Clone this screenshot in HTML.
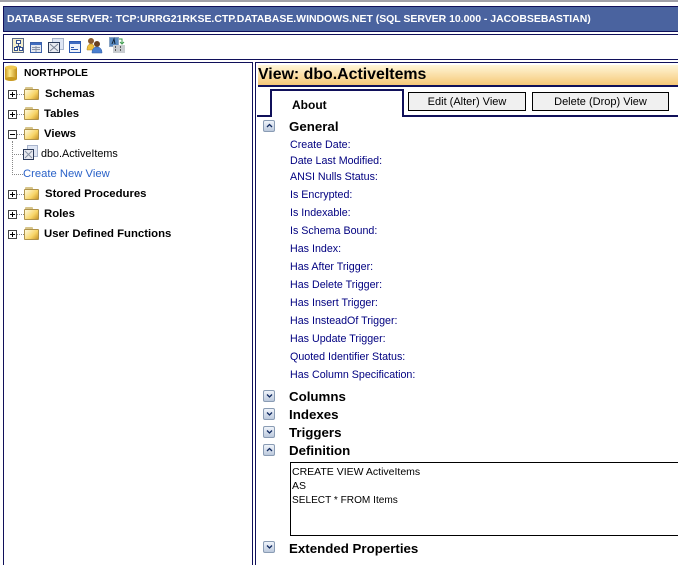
<!DOCTYPE html>
<html><head><meta charset="utf-8"><style>
html,body{margin:0;padding:0;background:#fff;overflow:hidden;width:678px;height:565px}
#w{width:678px;height:565px;position:relative;overflow:hidden;font-family:"Liberation Sans",sans-serif}
.a{position:absolute;white-space:nowrap;box-sizing:border-box}
.t{position:absolute;white-space:nowrap;font-size:11.35px;font-weight:bold;color:#000;line-height:14px}
.l{position:absolute;white-space:nowrap;font-size:10.7px;color:#000080;line-height:14px;left:290px}
.h{position:absolute;white-space:nowrap;font-size:13.3px;font-weight:bold;color:#000;line-height:16px;left:289px}
.pm{position:absolute;left:8px;width:9px;height:9px;border:1px solid #444;box-sizing:border-box;background:#fff}
.pm:before{content:"";position:absolute;left:1px;top:3px;width:5px;height:1px;background:#000}
.pm.p:after{content:"";position:absolute;left:3px;top:1px;width:1px;height:5px;background:#000}
.dh{position:absolute;left:17px;width:7px;border-top:1px dotted #888}
.f{position:absolute;left:24px;width:15px;height:11px;border:1px solid #b0934a;box-sizing:border-box;border-radius:1px;background:linear-gradient(135deg,#fffbe0,#f8d568 60%,#c9962a)}
.f:before{content:"";position:absolute;left:0;top:-3px;width:8px;height:2px;background:#d8c68c;border-radius:1px 1px 0 0}
.b{position:absolute;left:263px;width:12px;height:12px;box-sizing:border-box;border:1px solid #8a9cb4;border-radius:2px;background:linear-gradient(#f0f4fa,#bcc9dc)}
.b svg{position:absolute;left:2px;top:2px}
.btn{position:absolute;top:92px;height:19px;border:1px solid #000;background:#f0f0f0;font-size:11px;text-align:center;line-height:18px;box-sizing:border-box;color:#000}
</style></head><body><div id="w">
<div class="a" style="left:0;top:0;width:678px;height:2px;background:#a0a0a8"></div>
<div class="a" style="left:3px;top:6px;width:675px;height:26px;background:#4a639f;border:1px solid #10105a;border-right:0;color:#fff;font-size:10.5px;font-weight:bold;line-height:24px;padding-left:3px;letter-spacing:-.03px">DATABASE SERVER: TCP:URRG21RKSE.CTP.DATABASE.WINDOWS.NET (SQL SERVER 10.000 - JACOBSEBASTIAN)</div>
<div class="a" style="left:3px;top:34px;width:675px;height:26px;border:1px solid #10105a;border-right:0"></div>

<!-- toolbar icons -->
<svg class="a" style="left:11px;top:36px" width="120" height="20" viewBox="0 0 120 20">
<rect x="1.500" y="2.500" width="11" height="14" fill="#f4eecb" stroke="#5a6a8a"/><rect x="5.500" y="4.500" width="4" height="3" fill="#fff" stroke="#33508f"/><rect x="3.500" y="11.500" width="3" height="3" fill="#fff" stroke="#33508f"/><rect x="8.500" y="11.500" width="3" height="3" fill="#fff" stroke="#33508f"/><path d="M7.500 8v2M5 10.500h5" stroke="#33508f" fill="none"/>
<rect x="19.500" y="6.500" width="11" height="10" fill="#e4e8f0" stroke="#3a5fa8"/><rect x="20" y="7" width="10" height="2" fill="#3f6cc0"/><path d="M21 11.500h8M21 13.500h8M25 10v6" stroke="#8a94a8" fill="none"/>
<rect x="41.500" y="2.500" width="11" height="11" fill="#dfe6f4" stroke="#a8b4cc"/><rect x="37.500" y="6.500" width="11" height="10" fill="#e8eaf0" stroke="#2a3a5a"/><path d="M39 8l8 7M47 8l-8 7" stroke="#7a8496" fill="none"/>
<rect x="58.500" y="5.500" width="11" height="11" fill="#eef2fa" stroke="#2a58b0"/><rect x="59" y="6" width="10" height="2" fill="#3f6cc0"/><path d="M60 11.500h3M60 13.500h7" stroke="#2a58b0" fill="none"/>
<circle cx="80" cy="5" r="3" fill="#8a5a30"/><path d="M76 14c0-5 2-6 4-6s3 1 3 3v3z" fill="#f0c040" stroke="#a88020" stroke-width=".5"/><circle cx="86" cy="8" r="3" fill="#6a4020"/><path d="M81 17c0-5 3-6 5-6s5 1 5 6z" fill="#4a7fd0" stroke="#2a58a0" stroke-width=".5"/>
<rect x="98.500" y="1.500" width="9" height="9" fill="#5a8ac0" stroke="#8aa4c4"/><path d="M101 8l2-5 1 5" stroke="#123" fill="none"/><path d="M108 3h3v4" stroke="#3a9a4a" fill="none"/><path d="M109 6l2 2 2-2" stroke="#3a9a4a" fill="none"/><rect x="102" y="9" width="12" height="8" fill="#c8ccd0"/><path d="M104 11h2M109 11h2M104 14h2M109 14h2" stroke="#333" stroke-width="1.500" stroke-dasharray="1 1"/>
</svg>

<!-- left panel -->
<div class="a" style="left:3px;top:62px;width:250px;height:520px;border:1px solid #10105a"></div>
<svg class="a" style="left:5px;top:65px" width="13" height="16"><defs><linearGradient id="g"><stop offset="0" stop-color="#c99a20"/><stop offset=".4" stop-color="#ffe888"/><stop offset="1" stop-color="#c08e18"/></linearGradient></defs><rect x="0" y="2" width="12" height="12" fill="url(#g)"/><ellipse cx="6" cy="2.500" rx="6" ry="2" fill="#f0c850"/><ellipse cx="6" cy="14" rx="6" ry="2" fill="#c99a20"/></svg>
<div class="t" style="left:24px;top:67px;font-size:10.2px">NORTHPOLE</div>

<div class="pm p" style="top:90px"></div><div class="dh" style="top:94px"></div><div class="f" style="top:89px"></div><div class="t" style="left:45px;top:87px">Schemas</div>
<div class="pm p" style="top:110px"></div><div class="dh" style="top:114px"></div><div class="f" style="top:109px"></div><div class="t" style="left:44px;top:107px">Tables</div>
<div class="pm" style="top:130px"></div><div class="dh" style="top:134px"></div><div class="f" style="top:129px"></div><div class="t" style="left:44px;top:127px">Views</div>
<div class="a" style="left:12px;top:141px;height:34px;border-left:1px dotted #888"></div>
<div class="a" style="left:12px;top:154px;width:11px;border-top:1px dotted #888"></div>
<div class="a" style="left:12px;top:174px;width:11px;border-top:1px dotted #888"></div>
<svg class="a" style="left:23px;top:145px" width="15" height="16"><rect x="4.500" y="0.500" width="10" height="11" fill="#dfe6f4" stroke="#a8b4cc"/><rect x="0.500" y="4.500" width="10" height="10" fill="#e8eaf0" stroke="#2a3a5a"/><path d="M2 6l7 7M9 6l-7 7" stroke="#8a94a6" fill="none"/></svg>
<div class="t" style="left:41px;top:147px;font-weight:normal;font-size:10.8px">dbo.ActiveItems</div>
<div class="t" style="left:23px;top:167px;font-weight:normal;font-size:11.25px;color:#2a62c8">Create New View</div>
<div class="pm p" style="top:190px"></div><div class="dh" style="top:194px"></div><div class="f" style="top:189px"></div><div class="t" style="left:45px;top:187px">Stored Procedures</div>
<div class="pm p" style="top:210px"></div><div class="dh" style="top:214px"></div><div class="f" style="top:209px"></div><div class="t" style="left:44px;top:207px">Roles</div>
<div class="pm p" style="top:230px"></div><div class="dh" style="top:234px"></div><div class="f" style="top:229px"></div><div class="t" style="left:44px;top:227px">User Defined Functions</div>

<!-- right panel -->
<div class="a" style="left:255px;top:62px;width:423px;height:520px;border:1px solid #10105a;border-right:0"></div>
<div class="a" style="left:258px;top:65px;width:420px;height:22px;background:linear-gradient(#fff6d8,#f6c878);border-bottom:2px solid #10105a;font-size:15.9px;font-weight:bold;line-height:19px;color:#000">View: dbo.ActiveItems</div>
<div class="a" style="left:257px;top:115px;width:421px;height:2px;background:#10105a"></div>
<div class="a" style="left:270px;top:89px;width:134px;height:28px;background:#fff;border:2px solid #10105a;border-bottom:0;font-size:12px;font-weight:bold;line-height:28px;padding-left:20px">About</div>
<div class="btn" style="left:408px;width:118px">Edit (Alter) View</div>
<div class="btn" style="left:532px;width:137px">Delete (Drop) View</div>

<div class="b" style="top:120px"><svg width="7" height="6"><path d="M1 4l2.500-2.500L6 4" stroke="#102a60" stroke-width="1.300" fill="none"/></svg></div>
<div class="h" style="top:119px">General</div>
<div class="l" style="top:138px">Create Date:</div>
<div class="l" style="top:154px">Date Last Modified:</div>
<div class="l" style="top:170px">ANSI Nulls Status:</div>
<div class="l" style="top:188px">Is Encrypted:</div>
<div class="l" style="top:206px">Is Indexable:</div>
<div class="l" style="top:224px">Is Schema Bound:</div>
<div class="l" style="top:242px">Has Index:</div>
<div class="l" style="top:260px">Has After Trigger:</div>
<div class="l" style="top:278px">Has Delete Trigger:</div>
<div class="l" style="top:296px">Has Insert Trigger:</div>
<div class="l" style="top:314px">Has InsteadOf Trigger:</div>
<div class="l" style="top:332px">Has Update Trigger:</div>
<div class="l" style="top:350px">Quoted Identifier Status:</div>
<div class="l" style="top:368px">Has Column Specification:</div>

<div class="b" style="top:390px"><svg width="7" height="6"><path d="M1 1.500l2.500 2.500L6 1.500" stroke="#102a60" stroke-width="1.300" fill="none"/></svg></div>
<div class="h" style="top:389px">Columns</div>
<div class="b" style="top:408px"><svg width="7" height="6"><path d="M1 1.500l2.500 2.500L6 1.500" stroke="#102a60" stroke-width="1.300" fill="none"/></svg></div>
<div class="h" style="top:407px">Indexes</div>
<div class="b" style="top:426px"><svg width="7" height="6"><path d="M1 1.500l2.500 2.500L6 1.500" stroke="#102a60" stroke-width="1.300" fill="none"/></svg></div>
<div class="h" style="top:425px">Triggers</div>
<div class="b" style="top:444px"><svg width="7" height="6"><path d="M1 4l2.500-2.500L6 4" stroke="#102a60" stroke-width="1.300" fill="none"/></svg></div>
<div class="h" style="top:443px">Definition</div>
<div class="a" style="left:290px;top:462px;width:388px;height:74px;border:1px solid #000;border-right:0;font-size:10.5px;line-height:14px;padding:2px 0 0 1px;color:#000">CREATE VIEW ActiveItems<br>AS<br><span style="font-size:10.1px">SELECT * FROM Items</span></div>
<div class="b" style="top:541px"><svg width="7" height="6"><path d="M1 1.500l2.500 2.500L6 1.500" stroke="#102a60" stroke-width="1.300" fill="none"/></svg></div>
<div class="h" style="top:541px">Extended Properties</div>
</div></body></html>
